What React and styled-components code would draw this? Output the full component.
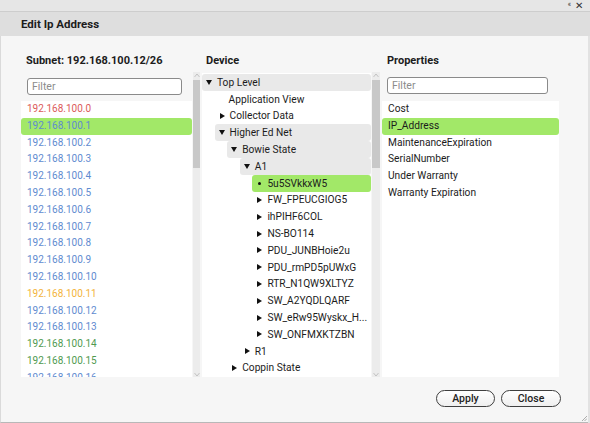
import React from "react";
import styled, { createGlobalStyle } from "styled-components";

const GlobalStyle = createGlobalStyle`
  html, body {
    margin: 0;
    padding: 0;
    background: #e2e2e2;
  }
  * {
    box-sizing: border-box;
  }
`;

const Window = styled.div`
  width: 590px;
  height: 423px;
  display: flex;
  flex-direction: column;
  background: #e2e2e2;
  font-family: Roboto, "Liberation Sans", sans-serif;
  color: #1c1c1c;
  overflow: hidden;
`;

const TopStrip = styled.div`
  height: 12px;
  display: flex;
  align-items: center;
  justify-content: flex-end;
  gap: 4px;
  padding-right: 7px;
  background: #e6e6e6;
  border-bottom: 1px solid #cdcdcd;
  color: #333;
`;

const StripIcon = styled.span`
  font-size: ${(p) => p.size}px;
  line-height: 1;
`;

const TitleBar = styled.div`
  height: 24px;
  display: flex;
  align-items: center;
  padding-left: 21px;
  background: #dedede;
  font-size: 11.5px;
  font-weight: 700;
`;

const Body = styled.div`
  position: relative;
  width: 588px;
  flex: 1;
  display: flex;
  flex-direction: column;
  padding: 18px 0 0 20px;
  background: #f6f6f6;
  border-left: 1px solid #dadada;
  border-bottom: 1px solid #b8b8b8;
`;

const Columns = styled.div`
  display: grid;
  grid-template-columns: 179px 178px 177px;
  column-gap: 2px;
`;

const Column = styled.div`
  display: flex;
  flex-direction: column;
`;

const Heading = styled.div`
  height: 14px;
  line-height: 14px;
  padding-left: ${(p) => p.indent}px;
  font-size: 11px;
  font-weight: 700;
  margin-bottom: 4px;
`;

const Pane = styled.div`
  height: 305px;
  display: flex;
`;

const PaneContent = styled.div`
  flex: 1;
  display: flex;
  flex-direction: column;
  overflow: hidden;
  padding-top: ${(p) => p.top || 0}px;
`;

const FilterRow = styled.div`
  height: 29px;
  flex: none;
  padding: ${(p) => p.top}px 0 0 ${(p) => p.left}px;
`;

const FilterInput = styled.input`
  display: block;
  width: ${(p) => p.w}px;
  height: 17px;
  padding: 0 4px;
  border: 1px solid #8a8a8a;
  border-radius: 3px;
  background: #fff;
  font-family: Roboto, "Liberation Sans", sans-serif;
  font-size: 10.5px;
  color: #222;
  outline: none;

  &::placeholder {
    color: #8c8c8c;
  }
`;

const List = styled.div`
  flex: 1;
  background: #fff;
  overflow: hidden;
`;

const Row = styled.div`
  height: 16.8px;
  line-height: 16.8px;
  padding-left: 6px;
  font-size: ${(p) => p.size || 10.2}px;
  white-space: nowrap;
  border-radius: 3px;
  color: ${(p) => p.color || "#1c1c1c"};
  background: ${(p) => (p.selected ? "#a2e868" : "transparent")};
`;

const Scrollbar = styled.div`
  width: ${(p) => p.w}px;
  margin-left: ${(p) => p.gap}px;
  flex: none;
  display: flex;
  flex-direction: column;
  align-items: center;
  background: #ececec;
  padding-top: 1px;
`;

const Thumb = styled.div`
  width: 100%;
  height: 88px;
  margin-top: 2px;
  background: #c8c8c8;
`;

const ScrollSpacer = styled.div`
  flex: 1;
`;

const Arrow = ({ down }) => (
  <svg width="6" height="5" viewBox="0 0 6 5">
    <path
      d={down ? "M0.5 1 L3 4 L5.5 1" : "M0.5 4 L3 1 L5.5 4"}
      fill="none"
      stroke="#b9b9b9"
      strokeWidth="0.8"
    />
  </svg>
);

const Tree = styled.div`
  flex: 1;
  overflow: hidden;
  padding-top: 1px;
  background: #fff;
`;

const TreeRow = styled.div`
  height: 16.8px;
  display: flex;
  align-items: center;
  margin-left: ${(p) => p.level * 12.6}px;
  padding-left: ${(p) => (p.toggle === "none" ? 14 : 4)}px;
  font-size: 10.2px;
  white-space: nowrap;
  border-radius: 3px;
  background: ${(p) =>
    p.selected ? "#a2e868" : p.open ? "#e9e9e9" : "transparent"};
`;

const Toggle = styled.span`
  width: 11px;
  flex: none;
  display: flex;
  align-items: center;

  &::before {
    content: "";
    display: block;
    border-style: solid;
    border-color: transparent;
    ${(p) =>
      p.kind === "open"
        ? "border-width: 5px 3px 0 3px; border-top-color: #111;"
        : p.kind === "closed"
        ? "border-width: 3px 0 3px 5px; border-left-color: #111; margin-left: 1px;"
        : "width: 3px; height: 3px; border-width: 0; border-radius: 50%; background: #111; margin-left: 2px;"}
  }
`;

const Footer = styled.div`
  display: flex;
  justify-content: flex-end;
  gap: 6px;
  padding-right: 27px;
  margin-top: 13px;
`;

const Button = styled.button`
  height: 17px;
  width: ${(p) => p.w}px;
  padding: 0;
  border: 1px solid #3f3f3f;
  border-radius: 9px;
  background: linear-gradient(#ffffff, #efefef);
  font-family: Roboto, "Liberation Sans", sans-serif;
  font-size: 10.5px;
  font-weight: 500;
  color: #222;
`;

const Grip = styled.svg`
  position: absolute;
  right: 1px;
  bottom: 1px;
`;

const RED = "#dc5a5a";
const BLUE = "#5f8bd0";
const ORANGE = "#f3b43b";
const GREEN = "#4f9a4f";

const ips = [
  RED, BLUE, BLUE, BLUE, BLUE, BLUE, BLUE, BLUE, BLUE, BLUE, BLUE,
  ORANGE, BLUE, BLUE, GREEN, GREEN, BLUE,
].map((color, i) => ({ label: `192.168.100.${i}`, color }));

const tree = [
  { label: "Top Level", level: 0, toggle: "open", open: true },
  { label: "Application View", level: 1, toggle: "none" },
  { label: "Collector Data", level: 1, toggle: "closed" },
  { label: "Higher Ed Net", level: 1, toggle: "open", open: true },
  { label: "Bowie State", level: 2, toggle: "open", open: true },
  { label: "A1", level: 3, toggle: "open", open: true },
  { label: "5u5SVkkxW5", level: 4, toggle: "dot", selected: true },
  { label: "FW_FPEUCGIOG5", level: 4, toggle: "closed" },
  { label: "ihPIHF6COL", level: 4, toggle: "closed" },
  { label: "NS-BO114", level: 4, toggle: "closed" },
  { label: "PDU_JUNBHoie2u", level: 4, toggle: "closed" },
  { label: "PDU_rmPD5pUWxG", level: 4, toggle: "closed" },
  { label: "RTR_N1QW9XLTYZ", level: 4, toggle: "closed" },
  { label: "SW_A2YQDLQARF", level: 4, toggle: "closed" },
  { label: "SW_eRw95Wyskx_H...", level: 4, toggle: "closed" },
  { label: "SW_ONFMXKTZBN", level: 4, toggle: "closed" },
  { label: "R1", level: 3, toggle: "closed" },
  { label: "Coppin State", level: 2, toggle: "closed" },
];

const properties = [
  "Cost",
  "IP_Address",
  "MaintenanceExpiration",
  "SerialNumber",
  "Under Warranty",
  "Warranty Expiration",
];

const ScrollTrack = ({ w, gap }) => (
  <Scrollbar w={w} gap={gap}>
    <Arrow />
    <Thumb />
    <ScrollSpacer />
    <Arrow down />
  </Scrollbar>
);

export default function App() {
  return (
    <Window>
      <GlobalStyle />
      <TopStrip>
        <StripIcon size={7}>«</StripIcon>
        <StripIcon size={10}>✕</StripIcon>
      </TopStrip>
      <TitleBar>Edit Ip Address</TitleBar>
      <Body>
        <Columns>
          <Column>
            <Heading indent={5}>Subnet: 192.168.100.12/26</Heading>
            <Pane>
              <PaneContent>
                <FilterRow top={6} left={6}>
                  <FilterInput w={155} placeholder="Filter" />
                </FilterRow>
                <List>
                  {ips.map((ip, i) => (
                    <Row key={ip.label} size={10} color={ip.color} selected={i === 1}>
                      {ip.label}
                    </Row>
                  ))}
                </List>
              </PaneContent>
              <ScrollTrack w={7} gap={1} />
            </Pane>
          </Column>

          <Column>
            <Heading indent={4}>Device</Heading>
            <Pane>
              <PaneContent top={1}>
                <Tree>
                  {tree.map((node) => (
                    <TreeRow
                      key={node.label}
                      level={node.level}
                      toggle={node.toggle}
                      open={node.open}
                      selected={node.selected}
                    >
                      {node.toggle !== "none" && <Toggle kind={node.toggle} />}
                      {node.label}
                    </TreeRow>
                  ))}
                </Tree>
              </PaneContent>
              <ScrollTrack w={8} gap={1} />
            </Pane>
          </Column>

          <Column>
            <Heading indent={5}>Properties</Heading>
            <Pane>
              <PaneContent>
                <FilterRow top={5} left={5}>
                  <FilterInput w={161} placeholder="Filter" />
                </FilterRow>
                <List>
                  {properties.map((p) => (
                    <Row key={p} selected={p === "IP_Address"}>
                      {p}
                    </Row>
                  ))}
                </List>
              </PaneContent>
            </Pane>
          </Column>
        </Columns>

        <Footer>
          <Button w={59}>Apply</Button>
          <Button w={60}>Close</Button>
        </Footer>

        <Grip width="6" height="6" viewBox="0 0 6 6">
          <path d="M1 6 L6 1 M3.5 6 L6 3.5" stroke="#9a9a9a" strokeWidth="0.8" />
        </Grip>
      </Body>
    </Window>
  );
}
